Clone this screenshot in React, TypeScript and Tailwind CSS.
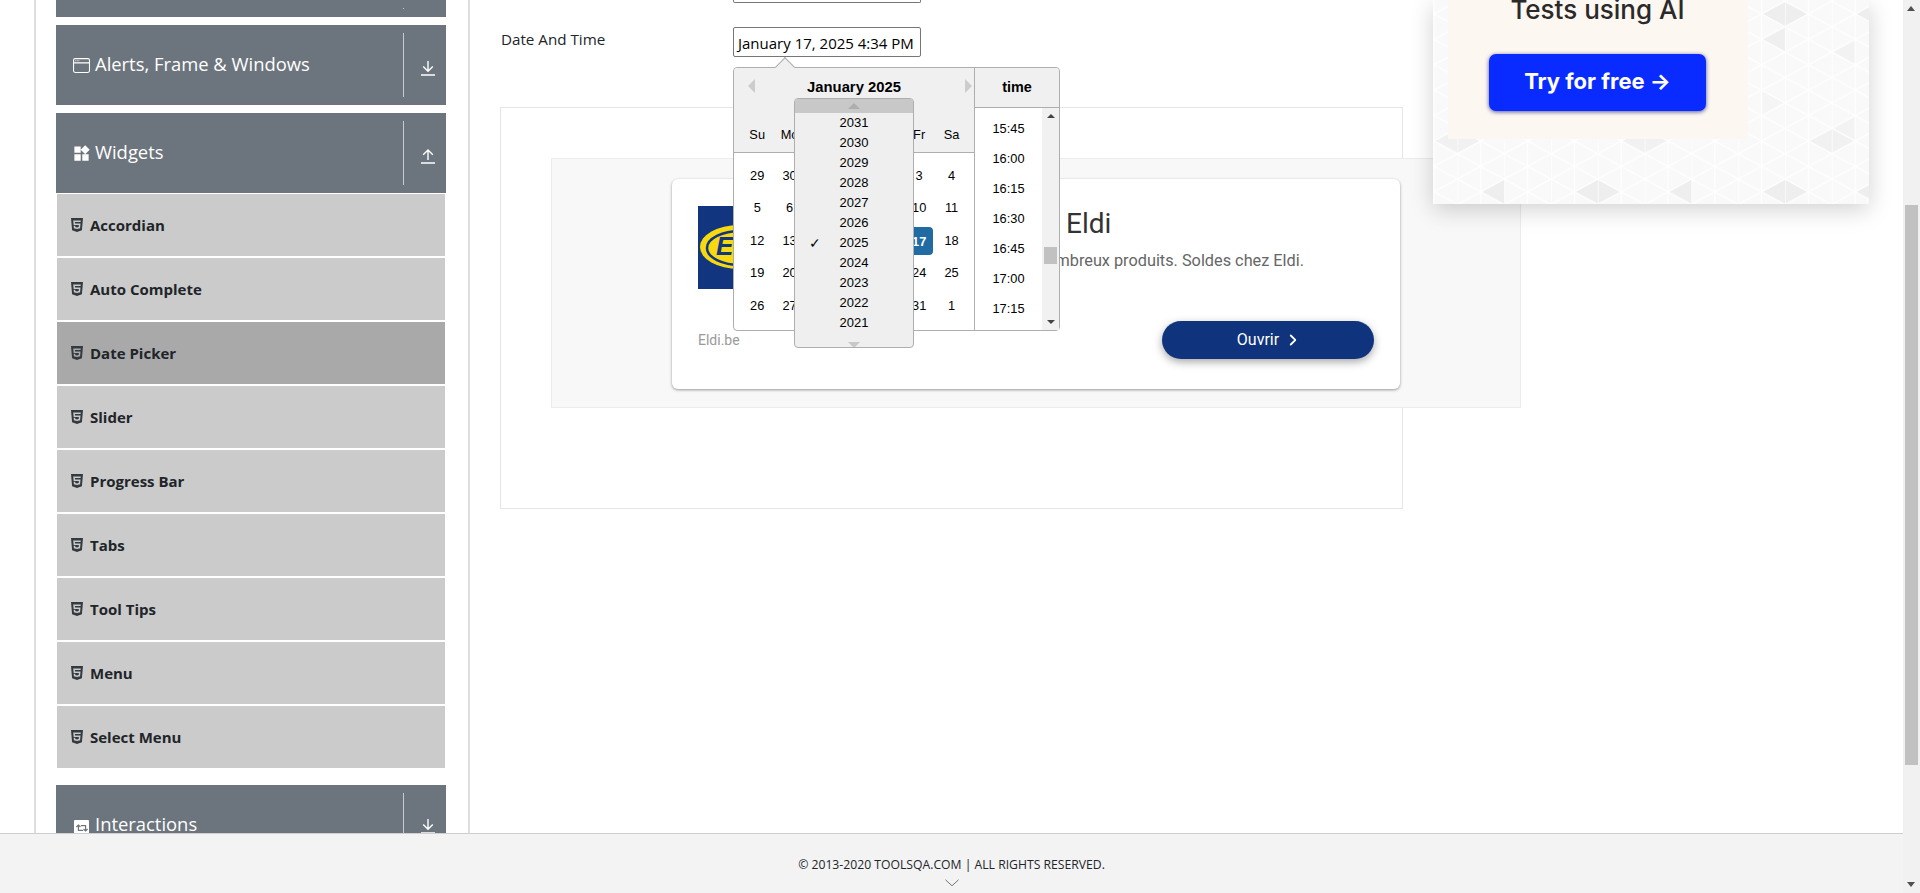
import React from 'react';
import { FaHtml5, FaRetweet } from 'react-icons/fa';
import { MdWidgets } from 'react-icons/md';
import { BsWindow, BsChevronRight } from 'react-icons/bs';

const WIDGET_ITEMS = ['Accordian', 'Auto Complete', 'Date Picker', 'Slider', 'Progress Bar', 'Tabs', 'Tool Tips', 'Menu', 'Select Menu'];
const DAY_NAMES = ['Su', 'Mo', 'Tu', 'We', 'Th', 'Fr', 'Sa'];
const DAYS = [29, 30, 31, 1, 2, 3, 4, 5, 6, 7, 8, 9, 10, 11, 12, 13, 14, 15, 16, 17, 18, 19, 20, 21, 22, 23, 24, 25, 26, 27, 28, 29, 30, 31, 1];
const YEARS = [2031, 2030, 2029, 2028, 2027, 2026, 2025, 2024, 2023, 2022, 2021];
const TIMES = ['15:45', '16:00', '16:15', '16:30', '16:45', '17:00', '17:15'];

const ArrowIcon = ({ dir }: { dir: 'up' | 'down' }) => (
    <svg width="16" height="16" viewBox="0 0 16 16" fill="none" stroke="white" strokeWidth="1.4">
        {dir === 'down' ? <path d="M8 1v10M3.2 6.5 8 11.2l4.8-4.7" /> : <path d="M8 12V2M3.2 6.7 8 2l4.8 4.7" />}
        <path d="M1 15h14" strokeWidth="1.5" />
    </svg>
);

const GroupHeader = ({ title, icon, dir, className }: { title?: string; icon?: React.ReactNode; dir?: 'up' | 'down'; className: string }) => (
    <div className={`relative flex items-center pl-[17px] bg-[#6c757d] text-white overflow-hidden ${className}`}>
        {title && (
            <div className="flex items-center gap-[5px] text-[18.4px] leading-none -mt-[2px]">
                <span className="w-[17px] h-[17px] mt-[3px] flex items-center justify-center">{icon}</span>
                <span>{title}</span>
            </div>
        )}
        <div className="absolute right-[42px] top-2 bottom-2 w-px bg-[#c8ccd0]" />
        {dir && (
            <span className="absolute right-[10px] top-[35px]">
                <ArrowIcon dir={dir} />
            </span>
        )}
    </div>
);

const Sidebar = () => (
    <div className="ml-[34px] w-[436px] h-full shrink-0 border-x-2 border-[#dedede] pl-[20px] pr-[22px] overflow-hidden">
        <GroupHeader className="h-[17px] !items-start" />
        <GroupHeader className="h-[80px] mt-2" title="Alerts, Frame & Windows" icon={<BsWindow size={17} />} dir="down" />
        <GroupHeader className="h-[80px] mt-2" title="Widgets" icon={<MdWidgets size={19} className="shrink-0" />} dir="up" />
        <ul className="flex flex-col gap-[2px] px-px pt-px">
            {WIDGET_ITEMS.map((item) => (
                <li
                    key={item}
                    className={`h-[62px] flex items-center pl-[12px] gap-[5px] text-[15px] font-bold text-[#212529] ${item === 'Date Picker' ? 'bg-[#a9a9a9]' : 'bg-[#cbcbcb]'}`}
                >
                    <FaHtml5 size={16} className="text-[#343a40] -mt-[1px]" />
                    <span>{item}</span>
                </li>
            ))}
        </ul>
        <div className="relative h-[80px] mt-[17px] bg-[#6c757d] text-white">
            <div className="absolute left-[18px] top-[30px] flex items-start gap-[6px] text-[18.4px] leading-none">
                <span className="w-[15px] h-[15px] mt-[5px] bg-white rounded-[1px] flex items-center justify-center text-[#6c757d]">
                    <FaRetweet size={12} />
                </span>
                <span>Interactions</span>
            </div>
            <div className="absolute right-[42px] top-2 bottom-2 w-px bg-[#c8ccd0]" />
            <span className="absolute right-[10px] top-[33px]">
                <ArrowIcon dir="down" />
            </span>
        </div>
    </div>
);

const TriangleFill = () => (
    <svg className="absolute inset-0 w-full h-full" xmlns="http://www.w3.org/2000/svg">
        <defs>
            <pattern id="shade" width="187.2" height="177.8" patternUnits="userSpaceOnUse" patternTransform="translate(71.2 1.3)">
                <rect width="187.2" height="177.8" fill="#f9f9f9" />
                {/* darker triangles, placed on the line lattice below */}
                <path d="M70.2 12.7 93.6 0l23.4 12.7-23.4 12.7z" fill="#eeeeee" />
                <path d="M70.2 38.1 93.6 25.4v25.4z" fill="#efefef" />
                <path d="M117 139.7 140.4 127l23.4 12.7-23.4 12.7z" fill="#f1f1f1" />
                <path d="M140.4 50.8 163.8 38.1v25.4z" fill="#f2f2f2" />
                <path d="M140.4 127 163.8 114.3V139.7z" fill="#f3f3f3" />
                <path d="M163.8 12.7 187.2 0v25.4z" fill="#eeeeee" />
                <path d="M23.4 76.2 46.8 63.5v25.4z" fill="#f4f4f4" />
                <path d="M70.2 88.9 93.6 101.6 70.2 114.3z" fill="#f5f5f5" />
            </pattern>
            <pattern id="lines" width="46.8" height="25.4" patternUnits="userSpaceOnUse" patternTransform="translate(71.2 1.3)">
                <path d="M0 0 46.8 25.4M46.8 0 0 25.4M0 0v25.4M23.4 0v25.4" stroke="#fff" strokeWidth="1.2" fill="none" />
            </pattern>
        </defs>
        <rect width="100%" height="100%" fill="url(#shade)" />
        <rect width="100%" height="100%" fill="url(#lines)" />
    </svg>
);

const RightAd = () => (
    <div className="relative w-[436px] h-[204px] shadow-[0_6px_22px_rgba(0,0,0,0.18)]">
        <TriangleFill />
        <div className="absolute left-[15px] top-0 w-[300px] h-[139px] bg-[#fdf7f1] flex flex-col items-center overflow-hidden pr-[1px]">
            <div className="h-[22px] -mt-[3px] text-[26px] leading-[26px] font-medium text-[#2a2a2a] font-['Inter',sans-serif] whitespace-nowrap">Tests using AI</div>
            <div className="mt-[35px] w-[217px] h-[57px] pb-[2px] rounded-[7px] bg-[#0a2bff] shadow-[0_1px_4px_rgba(10,20,120,0.7)] flex items-center justify-center text-white text-[22px] font-bold font-['Inter',sans-serif]">
                Try for free →
            </div>
        </div>
    </div>
);

const EldiLogo = () => (
    <svg width="83" height="83" viewBox="0 0 83 83" className="shrink-0">
        <rect width="83" height="83" fill="#12357f" />
        <ellipse cx="41" cy="41" rx="39" ry="22" fill="#f6d90f" />
        <ellipse cx="43" cy="42" rx="34" ry="17" fill="none" stroke="#12357f" strokeWidth="2.5" />
        <text x="18" y="49" fontSize="26" fontWeight="900" fontStyle="italic" fill="#12357f" fontFamily="'Liberation Sans', sans-serif">ELDI</text>
    </svg>
);

const AdFrame = () => (
    <div className="relative mt-[50px] w-[903px] h-[402px] border border-[#e6e6e6]">
        <div className="absolute left-[50px] top-[50px] w-[970px] h-[250px] bg-[#f8f8f8] border border-[#ececec] pl-[120px] pt-[20px]">
            <div className="relative w-[728px] h-[210px] bg-white rounded-[6px] shadow-[0_1px_3px_rgba(0,0,0,0.4)] px-[26px] pt-[27px]">
                <div className="flex">
                    <EldiLogo />
                    <div className="flex-1 flex flex-col items-end pr-[70px]">
                        <h2 className="self-start ml-[285px] mt-[1px] text-[28px] leading-[34px] text-[#333] font-['Roboto',sans-serif]">Eldi</h2>
                        <p className="mt-[9px] text-[16.3px] leading-[22px] text-[#666] font-['Roboto',sans-serif] whitespace-nowrap">De nombreux produits. Soldes chez Eldi.</p>
                    </div>
                </div>
                <div className="flex items-center justify-between mt-[32px]">
                    <span className="text-[14px] text-[#9a9a9a] font-['Roboto',sans-serif]">Eldi.be</span>
                    <div className="w-[212px] h-[38px] rounded-full bg-[#10337d] shadow-[0_3px_8px_rgba(0,0,0,0.35)] flex items-center justify-center gap-[8px] text-white text-[16px] font-['Roboto',sans-serif]">
                        <span>Ouvrir</span>
                        <BsChevronRight size={12} stroke="white" strokeWidth={1.4} />
                    </div>
                </div>
            </div>
        </div>
    </div>
);

const YearDropdown = () => (
    <div className="absolute left-[60px] top-[30px] z-20 w-[120px] h-[250px] bg-[#efefef] border border-[#aeaeae] rounded-[4px] overflow-hidden">
        <div className="h-[14px] bg-[#c8c8c8] flex items-center justify-center">
            <span className="w-0 h-0 border-x-[6px] border-x-transparent border-b-[6px] border-b-[#aeaeae]" />
        </div>
        <ul>
            {YEARS.map((year) => (
                <li key={year} className="relative h-5 leading-5 text-center text-[13px] text-black">
                    {year === 2025 && <span className="absolute left-[14px] top-0 text-[14px]">✓</span>}
                    {year}
                </li>
            ))}
        </ul>
        <div className="flex justify-center mt-[9px]">
            <span className="w-0 h-0 border-x-[6px] border-x-transparent border-t-[6px] border-t-[#c8c8c8]" />
        </div>
    </div>
);

const DatePopup = () => (
    <div className="absolute left-0 top-[40px] z-10 flex w-[327px] h-[264px] bg-white border border-[#aeaeae] rounded-[4px] text-black font-['Liberation_Sans',sans-serif]">
        <span className="absolute left-[44px] -top-[8px] w-[14px] h-[14px] rotate-45 bg-[#f0f0f0] border-l border-t border-[#aeaeae] origin-center" />
        <div className="relative w-[240px] shrink-0">
            <div className="relative h-[85px] bg-[#f0f0f0] border-b border-[#aeaeae] rounded-tl-[4px]">
                <span className="absolute left-[14px] top-[11px] w-0 h-0 border-y-[7px] border-y-transparent border-r-[7px] border-r-[#ccc]" />
                <span className="absolute right-[2px] top-[11px] w-0 h-0 border-y-[7px] border-y-transparent border-l-[7px] border-l-[#ccc]" />
                <div className="pt-[9px] text-center text-[14.8px] leading-[20px] font-bold">January 2025</div>
                <div className="grid grid-cols-[repeat(7,32.4px)] pl-[7px] mt-[28px] text-[12.8px] leading-[20px] text-center">
                    {DAY_NAMES.map((name) => (
                        <span key={name}>{name}</span>
                    ))}
                </div>
            </div>
            <div className="grid grid-cols-[repeat(7,32.4px)] auto-rows-[32.5px] pl-[7px] pt-[6px] text-[12.8px] text-center">
                {DAYS.map((day, index) => (
                    <span key={index} className="flex items-center justify-center">
                        <span className={day === 17 ? 'w-[27px] h-[28px] mt-[2px] rounded-[4px] bg-[#216ba5] text-white font-bold flex items-center justify-center' : ''}>{day}</span>
                    </span>
                ))}
            </div>
            <YearDropdown />
        </div>
        <div className="flex-1 border-l border-[#aeaeae] flex flex-col">
            <div className="h-[40px] shrink-0 bg-[#f0f0f0] border-b border-[#aeaeae] rounded-tr-[4px] flex items-center justify-center text-[14.4px] font-bold">time</div>
            <div className="relative flex-1 flex">
                <ul className="w-[67px] pt-[6px] text-[12.8px] text-center">
                    {TIMES.map((time) => (
                        <li key={time} className="h-[30px] leading-[30px]">{time}</li>
                    ))}
                </ul>
                <div className="relative flex-1 bg-[#f1f1f1]">
                    <span className="absolute left-[5px] top-[6px] w-0 h-0 border-x-[4px] border-x-transparent border-b-[4px] border-b-[#444]" />
                    <div className="absolute left-[2px] top-[139px] w-[13px] h-[17px] bg-[#c1c1c1]" />
                    <span className="absolute left-[5px] bottom-[6px] w-0 h-0 border-x-[4px] border-x-transparent border-t-[4px] border-t-[#444]" />
                </div>
            </div>
        </div>
    </div>
);

const MainContent = () => (
    <div className="flex-1 flex min-w-0">
        <div className="pl-[30px] w-[963px] shrink-0">
            <div className="ml-[233px] -mt-[1px] w-[188px] h-[4px] border border-t-0 border-[#767676] rounded-b-[2px]" />
            <div className="flex mt-[24px]">
                <label className="w-[233px] shrink-0 pl-px text-[15.2px] leading-[24px] text-[#212529]">Date And Time</label>
                <div className="relative">
                    <div className="w-[188px] h-[30px] pl-[4px] pt-[2px] flex items-center bg-white border border-[#767676] rounded-[2px] text-[15px] text-black whitespace-nowrap">
                        January 17, 2025 4:34 PM
                    </div>
                    <DatePopup />
                </div>
            </div>
            <AdFrame />
        </div>
        <RightAd />
    </div>
);

const ScrollTrack = () => (
    <div className="relative w-[17px] h-full shrink-0 bg-[#f1f1f1]">
        <span className="absolute left-[4px] top-[6px] w-0 h-0 border-x-[4.5px] border-x-transparent border-b-[5px] border-b-[#505050]" />
        <div className="absolute left-[2px] top-[205px] w-[13px] h-[560px] bg-[#c1c1c1]" />
        <span className="absolute left-[4px] bottom-[6px] w-0 h-0 border-x-[4.5px] border-x-transparent border-t-[5px] border-t-[#505050]" />
    </div>
);

export default function App() {
    return (
        <div className="flex w-full h-screen overflow-hidden bg-white font-['Open_Sans',sans-serif]">
            <div className="flex-1 min-w-0 flex flex-col">
                <div className="flex-1 min-h-0 flex overflow-hidden">
                    <Sidebar />
                    <MainContent />
                </div>
                <footer className="relative z-30 h-[60px] shrink-0 bg-[#f3f3f3] border-t border-[#cfcfcf] flex flex-col items-center pt-[23px]">
                    <span className="text-[12.2px] leading-[16px] text-[#212529] whitespace-nowrap">© 2013-2020 TOOLSQA.COM | ALL RIGHTS RESERVED.</span>
                    <svg width="14" height="8" viewBox="0 0 14 8" fill="none" stroke="#777" strokeWidth="1" className="mt-[6px]">
                        <path d="M.5.8 7 6.8 13.5.8" />
                    </svg>
                </footer>
            </div>
            <ScrollTrack />
        </div>
    );
}
